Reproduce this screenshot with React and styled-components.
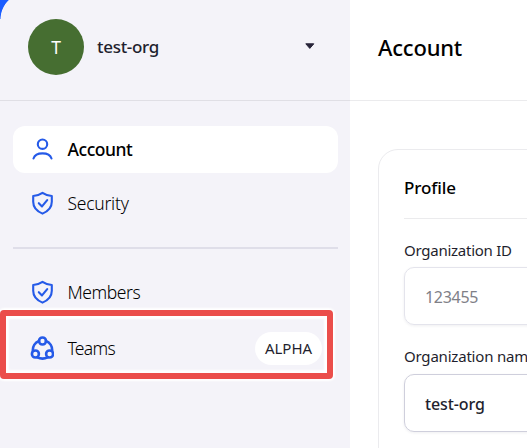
import React from "react";
import styled, { createGlobalStyle } from "styled-components";

const Global = createGlobalStyle`
  * { box-sizing: border-box; }
  body { margin: 0; overflow: hidden; background: #fff; font-family: "Noto Sans", "Open Sans", sans-serif; color: #1f1f2e; }
`;
const Page = styled.div`
  display: flex;
  width: 527px;
  height: 448px;
  overflow: hidden;
`;
const Sidebar = styled.aside`
  flex: 0 0 350px;
  height: 448px;
  background:
    radial-gradient(circle at 27.5px 19.5px, #f4f3f9 26.6px, #1a5cff 27.4px) 0 0 / 20px 19px no-repeat,
    #f4f3f9;
`;
const OrgHeader = styled.header`
  display: flex;
  align-items: center;
  height: 101px;
  padding: 0 35px 7px 28px;
  border-bottom: 1px solid #e0dfe5;
`;
const Avatar = styled.div`
  display: grid;
  place-items: center;
  width: 56px;
  height: 56px;
  margin-right: 13px;
  border-radius: 50%;
  background: #466e31;
  color: #fff;
`;
const Text = styled.span`
  font-size: ${(p) => p.$size || 17.5}px;
  font-weight: ${(p) => p.$weight || 400};
  letter-spacing: ${(p) => p.$track || 0}px;
  color: ${(p) => p.$color || "#1f1f2e"};
  line-height: 24px;
  white-space: nowrap;
`;
const Caret = styled.svg`
  width: 10px;
  height: 7px;
  margin-left: auto;
`;
const Nav = styled.nav`
  display: flex;
  flex-direction: column;
  padding: 25px 12px 0 13px;
`;
const Item = styled.a`
  position: relative;
  display: flex;
  align-items: center;
  height: 47px;
  margin-bottom: ${(p) => p.$gap || 0}px;
  padding: 0 16px 1px 17px;
  border-radius: 12px;
  background: ${(p) => (p.$active ? "#fff" : "transparent")};
`;
const Icon = styled.svg`
  width: 24px;
  height: 24px;
  margin-right: 13.5px;
  fill: none;
  stroke: #255ae8;
  stroke-width: ${(p) => p.$stroke || 2.1}px;
  stroke-linecap: round;
  stroke-linejoin: round;
`;
const Divider = styled.hr`
  width: 100%;
  height: 2px;
  margin: 0 0 20px;
  border: 0;
  background: #dfdee9;
`;
const Badge = styled.span`
  display: grid;
  place-items: center;
  width: 67px;
  height: 33px;
  margin-left: auto;
  border-radius: 17px;
  background: #fff;
`;
const Highlight = styled.div`
  position: absolute;
  left: -13px;
  top: -15px;
  width: 333px;
  height: 69px;
  border: 6px solid #eb4e4b;
  border-radius: 4px;
  box-shadow: 0 0 2px 2px #fff, inset 0 0 2px 3px #fff;
`;
const Main = styled.main`
  flex: 1;
  min-width: 0;
  height: 448px;
  background: #fff;
`;
const TitleBar = styled.header`
  display: flex;
  align-items: center;
  height: 101px;
  padding: 0 0 7px 28px;
  border-bottom: 1px solid #ebebed;
`;
const Card = styled.section`
  width: 400px;
  height: 400px;
  margin: 48px 0 0 28px;
  padding: 0 25px;
  border: 1px solid #ebebee;
  border-radius: 20px;
`;
const CardTitle = styled.div`
  display: flex;
  align-items: center;
  height: 69px;
  padding-top: 7px;
  border-bottom: 1px solid #ebebed;
`;
const Label = styled.label`
  display: flex;
  align-items: flex-end;
  height: ${(p) => p.$height}px;
  padding-bottom: ${(p) => p.$bottom}px;
`;
const Field = styled.div`
  display: flex;
  align-items: center;
  height: 58px;
  padding: 2px 20px 0;
  border: 1px solid ${(p) => (p.$muted ? "#e4e4ec" : "#cfcfdc")};
  border-radius: 10px;
  box-shadow: 0 1px 3px rgba(30, 30, 60, 0.07);
`;

const Shield = () => (
  <Icon viewBox="0 0 24 24">
    <path d="M12.5 1.8C9.6 3.8 6.7 4.6 3.2 5V10.8C3.2 16.1 6.8 20.3 12.5 22.6C18.2 20.3 21.8 16.1 21.8 10.8V5C18.3 4.6 15.4 3.8 12.5 1.8Z" />
    <path d="M8.8 12.2L12 15.4L17.2 9.1" />
  </Icon>
);

export default function App() {
  return (
    <>
      <Global />
      <Page>
        <Sidebar>
          <OrgHeader>
            <Avatar><Text $size={17.5} $color="#fff">T</Text></Avatar>
            <Text $size={17} $weight={500} $track={-0.3}>test-org</Text>
            <Caret viewBox="0 0 10 7"><path d="M.8 .8H8.8L4.8 5.4Z" fill="#28243a" stroke="#28243a" strokeLinejoin="round" /></Caret>
          </OrgHeader>
          <Nav>
            <Item $active $gap={7}>
              <Icon viewBox="0 0 24 24">
                <circle cx="12.5" cy="7.2" r="4.7" />
                <path d="M3.5 21.5C5.7 14.6 19.3 14.6 21.5 21.5" />
              </Icon>
              <Text $weight={500} $track={-0.45} $color="#000">Account</Text>
            </Item>
            <Item $gap={20}><Shield /><Text $weight={350} $track={-0.25} $color="#000">Security</Text></Item>
            <Divider />
            <Item $gap={9}><Shield /><Text $weight={350} $track={-0.45} $color="#000">Members</Text></Item>
            <Item>
              <Icon viewBox="0 0 24 24" $stroke={2.6}>
                <circle cx="12.5" cy="5" r="3.5" />
                <circle cx="5.4" cy="18" r="3.5" />
                <circle cx="19.6" cy="18" r="3.5" />
                <path d="M9 5A9.7 9.7 0 0 0 2.9 15M16 5A9.7 9.7 0 0 1 22.1 15M7.2 21.3Q12.5 23.9 17.8 21.3" />
              </Icon>
              <Text $weight={350} $track={-0.7} $color="#000">Teams</Text>
              <Badge><Text $size={15}>ALPHA</Text></Badge>
              <Highlight />
            </Item>
          </Nav>
        </Sidebar>
        <Main>
          <TitleBar><Text $size={22} $weight={500} $track={-0.2} $color="#000">Account</Text></TitleBar>
          <Card>
            <CardTitle><Text $size={17} $weight={500} $track={-0.1} $color="#000">Profile</Text></CardTitle>
            <Label $height={48} $bottom={5}><Text $size={15} $weight={450} $track={-0.25}>Organization ID</Text></Label>
            <Field $muted><Text $size={16} $weight={450} $track={-0.3} $color="#808087">123455</Text></Field>
            <Label $height={49} $bottom={6}><Text $size={15} $weight={450} $track={-0.2}>Organization name</Text></Label>
            <Field><Text $size={16} $weight={500} $track={-0.1}>test-org</Text></Field>
          </Card>
        </Main>
      </Page>
    </>
  );
}
